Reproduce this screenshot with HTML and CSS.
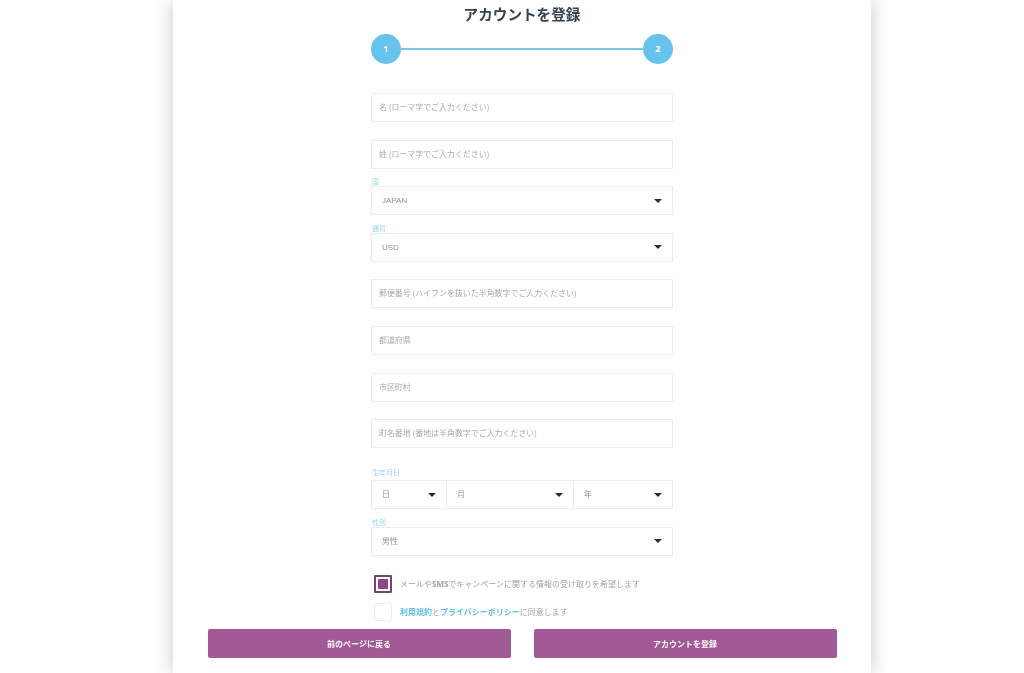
FILE: index.html
```html
<!DOCTYPE html>
<html lang="ja">
<head>
<meta charset="utf-8">
<title>アカウントを登録</title>
<link rel="stylesheet" href="styles.css">
</head>
<body>
<main class="card">
  <h1 class="title">アカウントを登録</h1>
  <div class="steps">
    <span class="step">1</span>
    <span class="step-line"></span>
    <span class="step">2</span>
  </div>
  <form class="form">
    <div class="field"><span class="label"></span><div class="box">名 (ローマ字でご入力ください)</div></div>
    <div class="field"><span class="label"></span><div class="box">姓 (ローマ字でご入力ください)</div></div>
    <div class="field"><span class="label">国</span><div class="box select"><span class="value">JAPAN</span><i class="caret"></i></div></div>
    <div class="field"><span class="label">通貨</span><div class="box select"><span class="value">USD</span><i class="caret"></i></div></div>
    <div class="field"><span class="label"></span><div class="box">郵便番号 (ハイフンを抜いた半角数字でご入力ください)</div></div>
    <div class="field"><span class="label"></span><div class="box">都道府県</div></div>
    <div class="field"><span class="label"></span><div class="box">市区町村</div></div>
    <div class="field"><span class="label"></span><div class="box">町名番地 (番地は半角数字でご入力ください)</div></div>
    <div class="field field-date"><span class="label">生年月日</span>
      <div class="box date">
        <div class="part part-d"><span class="value">日</span><i class="caret"></i></div>
        <div class="part part-m"><span class="value">月</span><i class="caret"></i></div>
        <div class="part part-y"><span class="value">年</span><i class="caret"></i></div>
      </div>
    </div>
    <div class="field"><span class="label">性別</span><div class="box select"><span class="value">男性</span><i class="caret"></i></div></div>
    <div class="check-row check-first"><span class="check checked"><i></i></span><span class="check-text">メールや<b>SMS</b>でキャンペーンに関する情報の受け取りを希望します</span></div>
    <div class="check-row"><span class="check"></span><span class="check-text"><a class="link">利用規約</a>と<a class="link">プライバシーポリシー</a>に同意します</span></div>
  </form>
  <div class="actions">
    <button type="button" class="btn">前のページに戻る</button>
    <button type="button" class="btn">アカウントを登録</button>
  </div>
</main>
</body>
</html>
```
FILE: styles.css
```css
* { box-sizing: border-box; }
html, body { margin: 0; height: 673px; overflow: hidden; background: #fff; }
body {
  font-family: "Noto Sans CJK JP", "Open Sans", "Liberation Sans", sans-serif;
  color: #9a9a9a;
}
.card {
  width: 698px;
  height: 673px;
  margin-left: 173px;
  background: #fff;
  box-shadow: 0 0 18px rgba(0, 0, 0, 0.22);
  display: flex;
  flex-direction: column;
  align-items: center;
  filter: blur(0.3px);
}
.title {
  margin: 2.5px 0 0;
  height: 22px;
  line-height: 22px;
  font-size: 14.6px;
  font-weight: 700;
  color: #36424f;
}
.steps {
  width: 302.5px;
  margin-top: 9px;
  display: flex;
  align-items: center;
}
.step {
  width: 30.5px;
  height: 30.5px;
  flex: none;
  border-radius: 50%;
  background: #66c3ee;
  color: #fff;
  font: 700 9.5px/30.5px "Open Sans", sans-serif;
  text-align: center;
}
.step-line { flex: 1; height: 2px; background: #7cc5e4; }
.form { width: 302px; margin-top: 12px; }
.field { height: 46.6px; padding-top: 17px; position: relative; }
.field-date { margin-top: 14.4px; }
.label {
  display: block;
  position: absolute;
  top: 8px;
  left: 1px;
  font-size: 7px;
  line-height: 8px;
  color: #9bd7ee;
}
.field-date .label { top: 5px; }
.box {
  height: 29px;
  border: 1px solid #ececec;
  background: #fff;
  padding-left: 7px;
  font-size: 7.95px;
  line-height: 25px;
  color: #aaa;
  white-space: nowrap;
}
.select {
  padding: 0 10px 0 10px;
  display: flex;
  align-items: center;
  justify-content: space-between;
}
.value { font-family: "Liberation Sans", "Noto Sans CJK JP", sans-serif; font-size: 8px; color: #929292; }
.caret {
  width: 0;
  height: 0;
  border-left: 4px solid transparent;
  border-right: 4px solid transparent;
  border-top: 4px solid #2c2c2c;
}
.date { padding: 0; display: flex; }
.part {
  display: flex;
  align-items: center;
  justify-content: space-between;
  padding: 0 10px 0 10px;
  border-left: 1px solid #ececec;
}
.part-d { width: 74px; border-left: 0; }
.part-m { width: 127px; }
.part-y { flex: 1; }
.check-row {
  display: flex;
  align-items: center;
  gap: 8px;
  height: 18px;
  margin: 0 0 10px 3px;
  font-size: 8px;
  color: #a2a2a2;
  white-space: nowrap;
}
.check-first { margin-top: 19px; }
.check-text { padding-bottom: 2px; }
.check {
  width: 18px;
  height: 18px;
  flex: none;
  border: 1px solid #ececec;
  border-radius: 1px;
  background: #fff;
  display: flex;
  align-items: center;
  justify-content: center;
}
.checked { border: 2px solid #7a3f73; }
.checked i { width: 10px; height: 10px; background: #8f4586; }
.check-row b { font-weight: 700; font-family: "Open Sans", sans-serif; }
.link { color: #5fbfe0; font-weight: 700; }
.actions {
  width: 629px;
  margin-top: -2px;
  display: flex;
  justify-content: space-between;
}
.btn {
  width: 303px;
  height: 29px;
  padding: 0;
  border: 0;
  border-radius: 2px;
  background: #a25a96;
  color: #fff;
  font-family: inherit;
  font-size: 8px;
  font-weight: 700;
}
```
